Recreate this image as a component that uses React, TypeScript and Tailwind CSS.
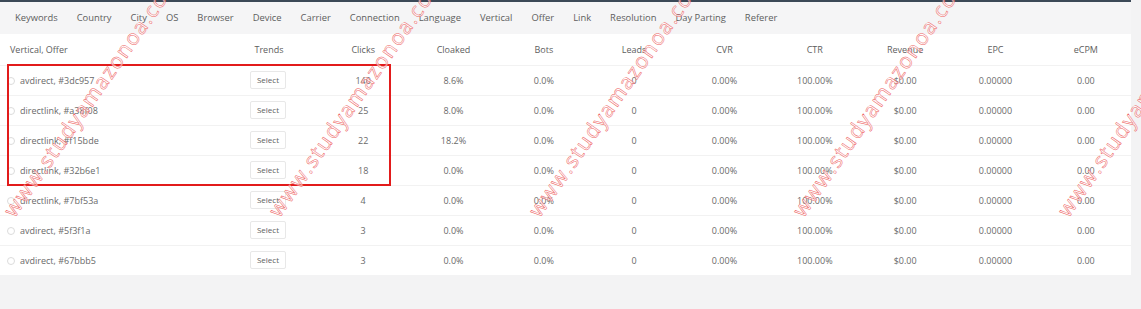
const TABS = [
  'Keywords', 'Country', 'City', 'OS', 'Browser', 'Device', 'Carrier', 'Connection',
  'Language', 'Vertical', 'Offer', 'Link', 'Resolution', 'Day Parting', 'Referer',
];

const COLUMNS = ['Clicks', 'Cloaked', 'Bots', 'Leads', 'CVR', 'CTR', 'Revenue', 'EPC', 'eCPM'];

const ROWS = [
  { name: 'avdirect, #3dc957', clicks: 140, cloaked: '8.6%' },
  { name: 'directlink, #a38f08', clicks: 25, cloaked: '8.0%' },
  { name: 'directlink, #f15bde', clicks: 22, cloaked: '18.2%' },
  { name: 'directlink, #32b6e1', clicks: 18, cloaked: '0.0%' },
  { name: 'directlink, #7bf53a', clicks: 4, cloaked: '0.0%' },
  { name: 'avdirect, #5f3f1a', clicks: 3, cloaked: '0.0%' },
  { name: 'avdirect, #67bbb5', clicks: 3, cloaked: '0.0%' },
];

const WATERMARK_X = [8, 273, 533, 797, 1062];

export default function App() {
  return (
    <div className="relative w-[1141px] h-[309px] overflow-hidden bg-[#f3f3f4] font-['Open_Sans',sans-serif] text-[#6a6a6a]">
      <div className="w-[1131px] bg-white">
        <div className="h-[2px] bg-[#3c4957]" />
        <nav className="h-[32px] bg-[#f5f5f6] flex items-center gap-[19px] pl-[15px] text-[9.4px] text-[#5e5e5e]">
          {TABS.map((t) => (
            <span key={t}>{t}</span>
          ))}
        </nav>

        <table className="w-full table-fixed border-collapse text-[9px]">
          <colgroup>
            <col className="w-[220px]" />
            <col className="w-[98px]" />
            {COLUMNS.map((c) => (
              <col key={c} />
            ))}
          </colgroup>
          <thead>
            <tr className="h-[31px] text-[#5e5e5e]">
              <th className="text-left font-normal pl-[10px]">Vertical, Offer</th>
              <th className="font-normal">Trends</th>
              {COLUMNS.map((c) => (
                <th key={c} className="font-normal">{c}</th>
              ))}
            </tr>
          </thead>
          <tbody>
            {ROWS.map((r) => (
              <tr key={r.name} className="h-[30px] border-t border-[#f2f2f2]">
                <td className="pl-[7px] pt-[1px]">
                  <div className="flex items-center gap-[5px]">
                    <span className="w-[8px] h-[8px] rounded-full border border-[#dcdcdc]" />
                    <span>{r.name}</span>
                  </div>
                </td>
                <td className="text-center">
                  <button className="h-[18px] w-[36px] border border-[#e8e8e8] rounded-[2px] bg-white text-[8px] text-[#5e5e5e] translate-x-[-1px]">
                    Select
                  </button>
                </td>
                <td className="text-center pt-[1px]">{r.clicks}</td>
                <td className="text-center pt-[1px]">{r.cloaked}</td>
                <td className="text-center pt-[1px]">0.0%</td>
                <td className="text-center pt-[1px]">0</td>
                <td className="text-center pt-[1px]">0.00%</td>
                <td className="text-center pt-[1px]">100.00%</td>
                <td className="text-center pt-[1px]">$0.00</td>
                <td className="text-center pt-[1px]">0.00000</td>
                <td className="text-center pt-[1px]">0.00</td>
              </tr>
            ))}
          </tbody>
        </table>
      </div>

      {/* highlight box */}
      <div className="absolute left-[7px] top-[64px] w-[384px] h-[122px] border-2 border-[#e21b1b] pointer-events-none" />

      {/* watermark */}
      {WATERMARK_X.map((x) => (
        <span
          key={x}
          className="absolute top-[202px] origin-left -rotate-[55deg] whitespace-nowrap text-[21px] leading-[24px] tracking-[1.5px] text-[rgba(255,255,255,0.6)] [-webkit-text-stroke:0.5px_#ee6262] pointer-events-none"
          style={{ left: x }}
        >
          www.studyamazonoa.com
        </span>
      ))}
    </div>
  );
}
